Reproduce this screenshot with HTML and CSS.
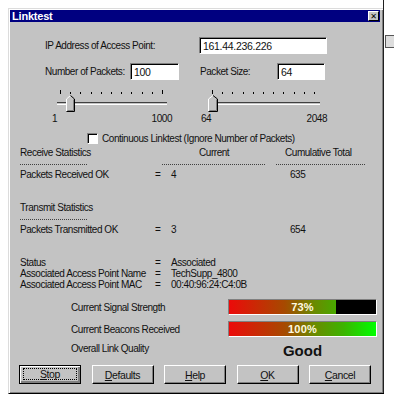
FILE: index.html
```html
<!DOCTYPE html>
<html lang="en">
<head>
    <meta charset="UTF-8">
    <title>Linktest</title>
    <link rel="stylesheet" href="styles.css">
</head>
<body>

<div class="screen">
    <div class="dialog">
        <div class="titlebar">
            <span class="title">Linktest</span>
            <span class="close">&#x2715;</span>
        </div>

        <!-- Target and packet settings -->
        <div class="row row-ip">
            <span class="lbl lbl-ip">IP Address of Access Point:</span>
            <span class="field field-ip">161.44.236.226</span>
        </div>
        <div class="row row-packets">
            <span class="lbl lbl-num">Number of Packets:</span>
            <span class="field field-num">100</span>
            <span class="lbl lbl-size">Packet Size:</span>
            <span class="field field-size">64</span>
        </div>

        <div class="row row-sliders">
            <div class="slider slider-num">
                <div class="ticks">
                    <i class="big"></i><i></i><i></i><i></i><i></i><i></i><i></i><i></i><i></i><i></i><i class="big"></i>
                </div>
                <div class="rail">
                    <div class="track"></div>
                    <svg class="thumb" style="left: 14px" width="9" height="17" viewBox="0 0 9 17">
                        <polygon points="0.5,16.5 0.5,4 4.5,0.5 8.5,4 8.5,16.5" fill="#c3c3c3" stroke="none"/>
                        <polyline points="0.5,16 0.5,4 4.5,0.5" fill="none" stroke="#fff"/>
                        <polyline points="4.5,0.5 8.5,4 8.5,16.5 0.5,16.5" fill="none" stroke="#000"/>
                        <polyline points="7.5,4.5 7.5,15.5 1.5,15.5" fill="none" stroke="#808080"/>
                    </svg>
                </div>
                <div class="ends"><span>1</span><span>1000</span></div>
            </div>
            <div class="slider slider-size">
                <div class="ticks">
                    <i class="big"></i><i></i><i></i><i></i><i></i><i></i><i></i><i></i><i></i><i></i><i></i>
                </div>
                <div class="rail">
                    <div class="track"></div>
                    <svg class="thumb" style="left: 7px" width="10" height="17" viewBox="0 0 10 17">
                        <polygon points="0.5,16.5 0.5,4 5,0.5 9.5,4 9.5,16.5" fill="#c3c3c3" stroke="none"/>
                        <polyline points="0.5,16 0.5,4 5,0.5" fill="none" stroke="#fff"/>
                        <polyline points="5,0.5 9.5,4 9.5,16.5 0.5,16.5" fill="none" stroke="#000"/>
                        <polyline points="8.5,4.5 8.5,15.5 1.5,15.5" fill="none" stroke="#808080"/>
                    </svg>
                </div>
                <div class="ends"><span>64</span><span>2048</span></div>
            </div>
        </div>

        <div class="row row-check">
            <span class="checkbox"></span>
            <span>Continuous Linktest (Ignore Number of Packets)</span>
        </div>

        <!-- Statistics -->
        <div class="stats">
            <div class="head">
                <span class="h1">Receive Statistics</span>
                <span class="h2">Current</span>
                <span>Cumulative Total</span>
            </div>
            <div class="dots">
                <span class="d1"></span><span class="d2"></span><span class="d3"></span>
            </div>
            <div class="line first">
                <span class="name">Packets Received OK</span><span class="eq">=</span><span class="cur">4</span><span>635</span>
            </div>

            <div class="head section">
                <span class="h1">Transmit Statistics</span>
            </div>
            <div class="dots">
                <span class="d1"></span>
            </div>
            <div class="line first">
                <span class="name">Packets Transmitted OK</span><span class="eq">=</span><span class="cur">3</span><span>654</span>
            </div>

            <div class="line tight status">
                <span class="name">Status</span><span class="eq">=</span><span>Associated</span>
            </div>
            <div class="line tight">
                <span class="name">Associated Access Point Name</span><span class="eq">=</span><span>TechSupp_4800</span>
            </div>
            <div class="line tight">
                <span class="name">Associated Access Point MAC</span><span class="eq">=</span><span>00:40:96:24:C4:0B</span>
            </div>
        </div>

        <!-- Link quality meters -->
        <div class="meters">
            <div class="meter-row">
                <span class="mlabel">Current Signal Strength</span>
                <div class="bar">
                    <div class="fill" style="width: 73%"></div>
                    <span class="pct">73%</span>
                </div>
            </div>
            <div class="meter-row second">
                <span class="mlabel">Current Beacons Received</span>
                <div class="bar">
                    <div class="fill" style="width: 100%"></div>
                    <span class="pct">100%</span>
                </div>
            </div>
            <div class="meter-row quality">
                <span class="mlabel">Overall Link Quality</span>
                <span class="good">Good</span>
            </div>
        </div>

        <div class="buttons">
            <button class="btn default"><span class="focus"><u>S</u>top</span></button>
            <button class="btn"><u>D</u>efaults</button>
            <button class="btn"><u>H</u>elp</button>
            <button class="btn"><u>O</u>K</button>
            <button class="btn"><u>C</u>ancel</button>
        </div>
    </div>

    <div class="backwin">
        <span class="backbox"></span>
    </div>
</div>

</body>
</html>
```

FILE: styles.css
```css
body {
    margin: 0;
    background: #fff;
    font-family: "Liberation Sans", Arial, sans-serif;
    font-size: 10px;
    letter-spacing: -0.45px;
    color: #111;
    white-space: nowrap;
}
.screen {
    display: flex;
    align-items: flex-start;
}
.dialog {
    box-sizing: border-box;
    width: 376px;
    height: 386px;
    margin: 8px 0 0 8px;
    padding: 1px 3px 1px 1px;
    background: #c3c3c3;
    border: 1px solid;
    border-color: #dcdcdc #000 #000 #dcdcdc;
    box-shadow: inset 1px 1px #fff, inset -1px -1px #808080;
}
.titlebar {
    height: 12px;
    background: #000080;
    color: #fff;
    display: flex;
    align-items: center;
    justify-content: space-between;
    padding: 0 1px 0 2px;
}
.title {
    font-weight: bold;
    font-size: 11px;
    letter-spacing: -0.2px;
}
.close {
    width: 11px;
    height: 10px;
    box-sizing: border-box;
    background: #c3c3c3;
    color: #000;
    font-family: "DejaVu Sans", sans-serif;
    font-size: 8px;
    font-weight: bold;
    line-height: 9px;
    text-align: center;
    border: 1px solid;
    border-color: #fff #000 #000 #fff;
    letter-spacing: 0;
}

.row {
    display: flex;
    align-items: center;
}
.field {
    box-sizing: border-box;
    height: 17px;
    background: #fff;
    border: 1px solid;
    border-color: #808080 #fff #fff #808080;
    box-shadow: inset 1px 1px #000;
    padding: 1px 0 0 3px;
    line-height: 14px;
    font-size: 10.5px;
    letter-spacing: -0.3px;
}
.row-ip {
    margin-top: 15px;
    padding-left: 35px;
}
.lbl-ip { width: 154px; }
.field-ip { width: 128px; }
.row-packets {
    margin-top: 9px;
    padding-left: 35px;
}
.lbl-num { width: 85px; }
.field-num { width: 49px; }
.lbl-size { width: 77px; margin-left: 21px; }
.field-size { width: 48px; }

/* trackbars */
.row-sliders {
    margin-top: 9px;
    padding-left: 42px;
    align-items: flex-start;
}
.slider { position: relative; }
.slider-num { width: 120px; }
.slider-size { width: 126px; margin-left: 29px; }
.ticks {
    display: flex;
    justify-content: space-between;
    align-items: flex-end;
    height: 5px;
    width: 103px;
}
.slider-num .ticks { margin-left: 8px; }
.slider-size .ticks { margin-left: 11px; }
.ticks i {
    width: 1px;
    height: 2px;
    background: #000;
}
.ticks i.big { height: 4px; }
.rail {
    position: relative;
    height: 19px;
}
.track {
    position: absolute;
    top: 8px;
    height: 1px;
    border-top: 1px solid #404040;
    border-bottom: 1px solid #fff;
}
.slider-num .track { left: 5px; width: 110px; }
.slider-size .track { left: 7px; width: 112px; }
.thumb { position: absolute; top: 1px; }
.ends {
    display: flex;
    justify-content: space-between;
    height: 11px;
    line-height: 11px;
}

.row-check {
    margin-top: 8px;
    padding-left: 77px;
    height: 13px;
}
.checkbox {
    box-sizing: border-box;
    width: 11px;
    height: 11px;
    margin-right: 4px;
    background: #fff;
    border: 1px solid;
    border-color: #808080 #fff #fff #808080;
    box-shadow: inset 1px 1px #000;
}

/* statistics block */
.stats {
    padding-left: 10px;
}
.head {
    display: flex;
    height: 12px;
    line-height: 12px;
    margin-top: 2px;
}
.head.section { margin-top: 21px; }
.h1 { width: 179px; }
.h2 { width: 86px; }
.dots {
    display: flex;
    align-items: flex-end;
    height: 6px;
}
.dots span {
    height: 1px;
    background: repeating-linear-gradient(to right, #404040 0 1px, transparent 1px 2px);
}
.d1 { width: 67px; }
.d2 { width: 103px; margin-left: 75px; }
.d3 { width: 89px; margin-left: 11px; }
.line {
    display: flex;
    height: 12px;
    line-height: 12px;
}
.line.first { margin-top: 4px; }
.line.tight {
    height: 11px;
    line-height: 11px;
}
.line.status { margin-top: 21px; }
.name { width: 135px; }
.eq { width: 16px; }
.cur { width: 119px; }

/* meters */
.meters {
    padding-left: 61px;
    margin-top: 9px;
}
.meter-row {
    display: flex;
    align-items: center;
    height: 16px;
}
.meter-row.second { margin-top: 6px; }
.meter-row.quality { margin-top: 3px; height: 17px; }
.mlabel { width: 157px; }
.bar {
    position: relative;
    box-sizing: border-box;
    width: 149px;
    height: 16px;
    background: #000;
    border: 1px solid;
    border-color: #808080 #fff #fff #808080;
}
.fill {
    height: 100%;
    background: linear-gradient(to right, #ec0a0a 0%, #a64a00 38%, #6a8a00 58%, #3cb400 78%, #00ff00 100%);
    background-size: 147px 100%;
}
.pct {
    position: absolute;
    left: 0;
    right: 0;
    top: 0;
    text-align: center;
    font-weight: bold;
    font-size: 11px;
    line-height: 14px;
    letter-spacing: 0.2px;
    color: #fffbe0;
}
.good {
    width: 149px;
    text-align: center;
    font-weight: bold;
    font-size: 15px;
    letter-spacing: 0;
    padding-top: 3px;
}

/* buttons */
.buttons {
    display: flex;
    gap: 10.5px;
    margin-top: 8px;
    padding-left: 9px;
}
.btn {
    box-sizing: border-box;
    width: 62px;
    height: 19px;
    padding: 0;
    background: #c3c3c3;
    font-family: "Liberation Sans", Arial, sans-serif;
    font-size: 10.5px;
    letter-spacing: -0.4px;
    color: #111;
    border: 1px solid;
    border-color: #fff #000 #000 #fff;
    box-shadow: inset -1px -1px #808080;
}
.btn.default {
    border: 1px solid #000;
    box-shadow: inset 1px 1px #fff, inset -2px -2px #808080;
    padding: 2px 3px 3px 3px;
}
.focus {
    display: block;
    height: 100%;
    box-sizing: border-box;
    border: 1px dotted #000;
    line-height: 11px;
}

.backwin {
    width: 10px;
    height: 393px;
    margin-left: -1px;
    border-left: 1px solid #202020;
    background: #fff;
}
.backbox {
    display: block;
    margin-top: 35px;
    margin-left: 1px;
    width: 8px;
    height: 11px;
    border: 1px solid #555;
    border-right: none;
    background: #ddd;
}
```
